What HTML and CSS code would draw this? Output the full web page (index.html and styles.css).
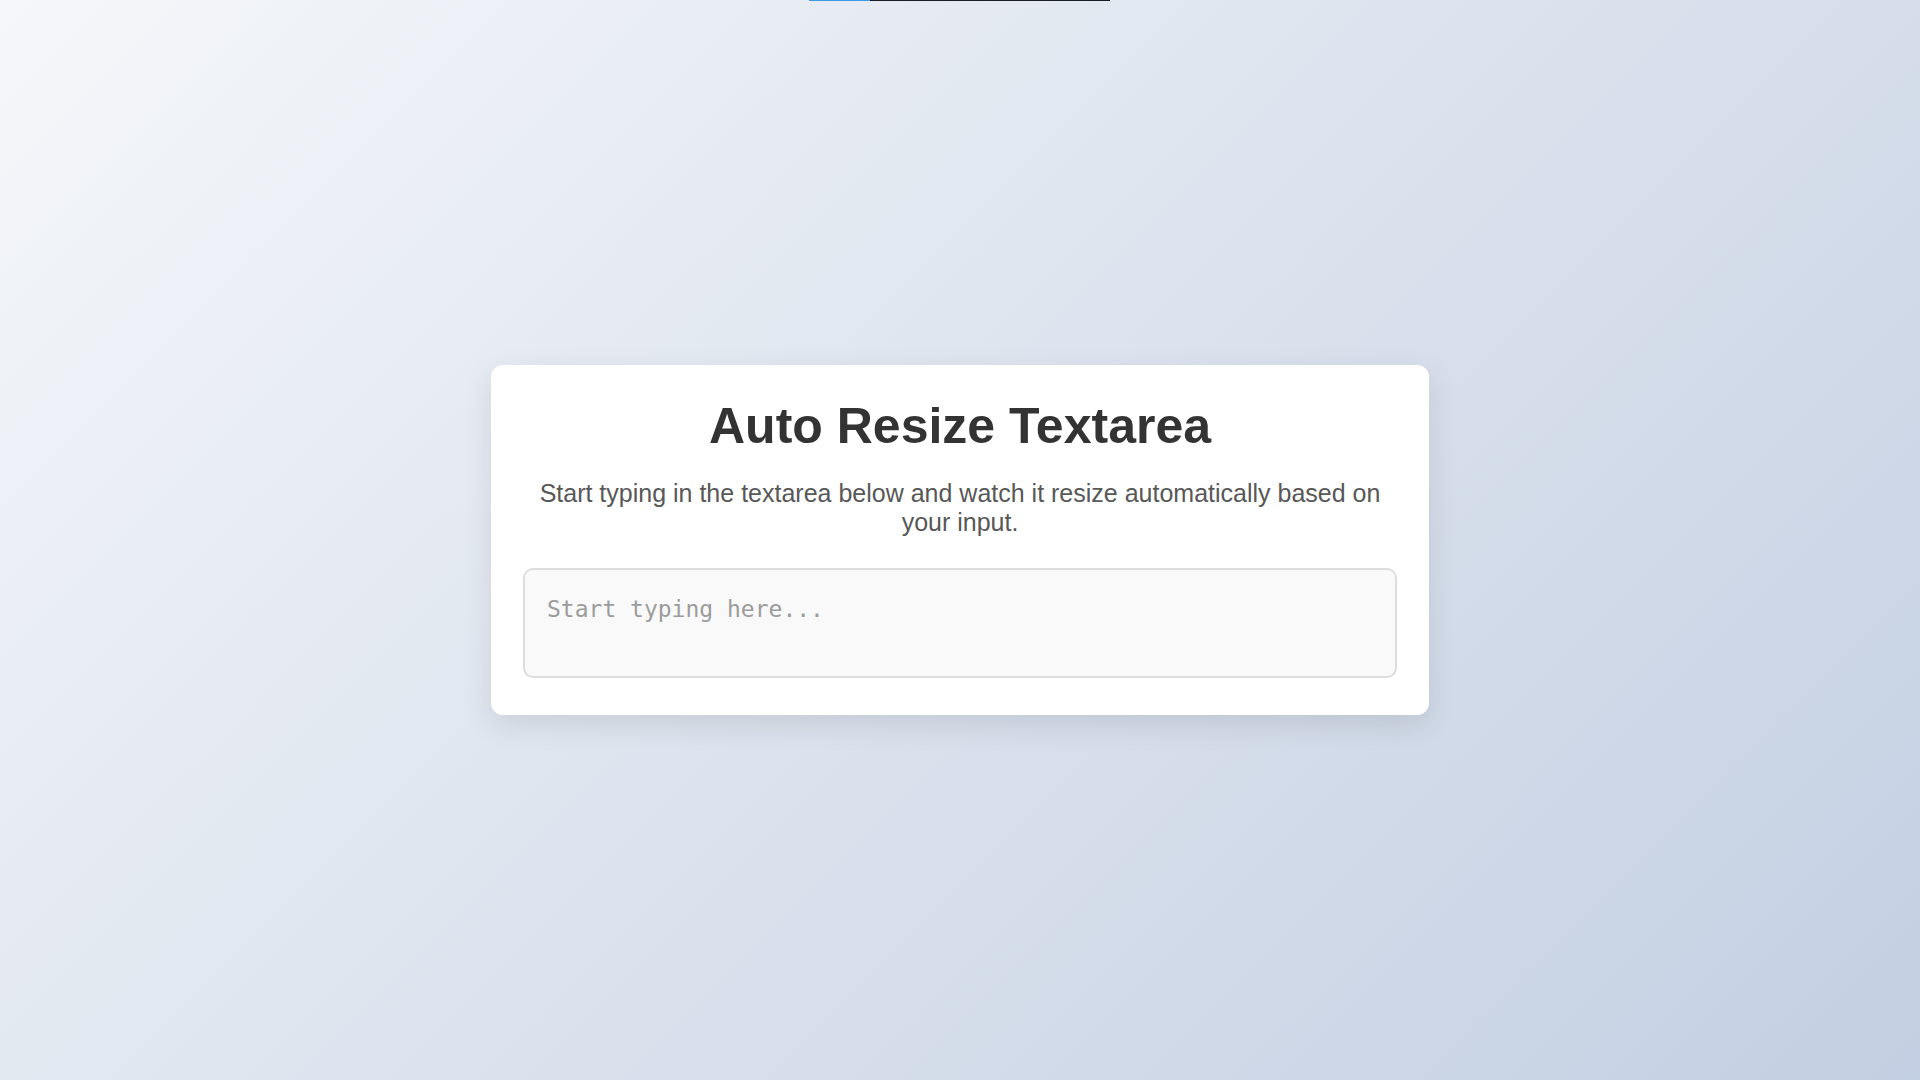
FILE: index.html
```html
<!DOCTYPE html>
<html lang="en">
<head>
<meta charset="utf-8">
<title>Auto Resize Textarea</title>
<link rel="stylesheet" href="styles.css">
</head>
<body>
<div class="top-bar"><span class="top-bar-fill"></span></div>
<main class="card">
  <h1 class="title">Auto Resize Textarea</h1>
  <p class="subtitle">Start typing in the textarea below and watch it resize automatically based on your input.</p>
  <textarea class="auto-textarea" rows="2" placeholder="Start typing here..."></textarea>
</main>
</body>
</html>
```

FILE: styles.css
```css
* { box-sizing: border-box; }

html, body {
  margin: 0;
  padding: 0;
  height: 100%;
}

body {
  font-family: "Liberation Sans", Arial, sans-serif;
  background: linear-gradient(135deg, #f5f7fa 0%, #c3cfe2 100%);
  min-height: 100vh;
  display: flex;
  align-items: center;
  justify-content: center;
}

.top-bar {
  position: absolute;
  top: 0;
  left: 809px;
  width: 301px;
  height: 1px;
  background: #1a1d24;
  display: flex;
}

.top-bar-fill {
  width: 61px;
  height: 100%;
  background: #3d9be3;
}

.card {
  width: 938px;
  background: #ffffff;
  border-radius: 12px;
  padding: 32px 32px 37px;
  box-shadow: 0 10px 30px rgba(0, 0, 0, 0.1);
  text-align: center;
}

.title {
  margin: 0 0 23.5px;
  font-size: 50px;
  font-weight: bold;
  line-height: normal;
  color: #333333;
}

.subtitle {
  margin: 0 0 30.6px;
  font-size: 25px;
  line-height: 29.4px;
  color: #585858;
}

.auto-textarea {
  display: block;
  width: 100%;
  height: 110px;
  padding: 23px 22px 21px;
  border: 2px solid #dddddd;
  border-radius: 10px;
  background: #f9f9f9;
  font-family: "DejaVu Sans Mono", monospace;
  font-size: 23px;
  line-height: 1.4;
  color: #333333;
  resize: none;
  outline: none;
  overflow: hidden;
  text-align: left;
}

.auto-textarea::placeholder {
  color: #9c9c9c;
}
```
